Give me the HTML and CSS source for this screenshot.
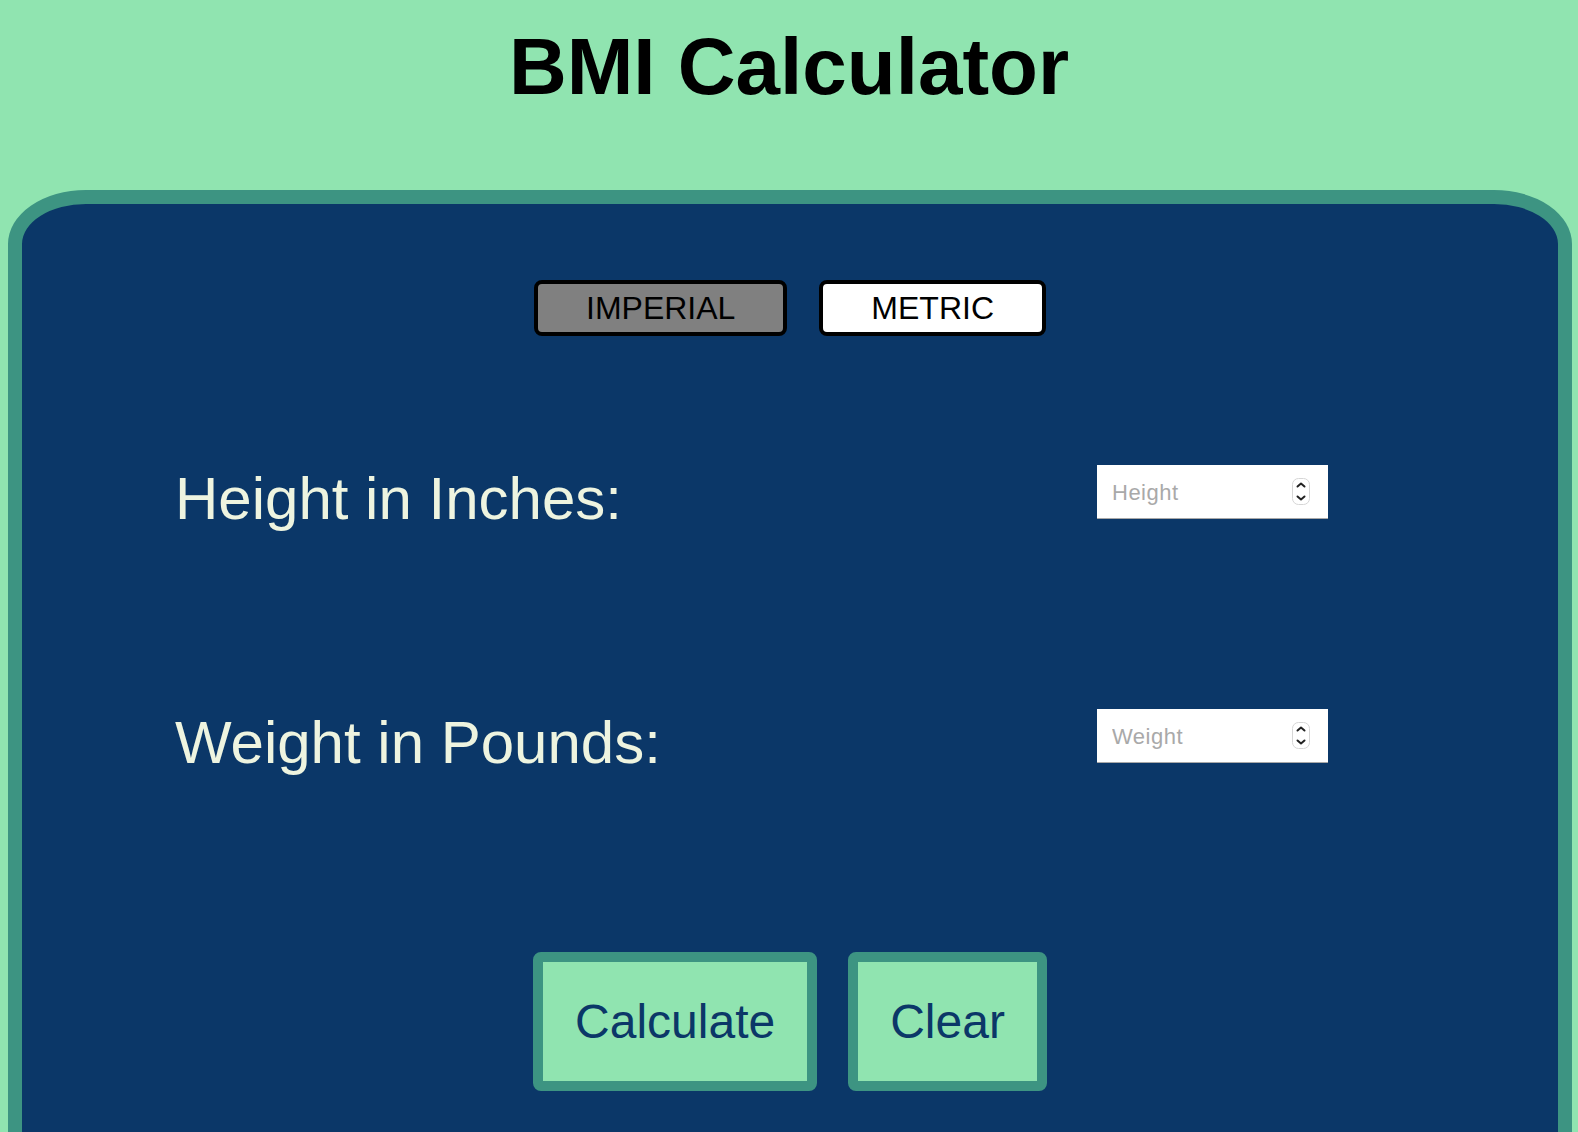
FILE: index.html
```html
<!DOCTYPE html>
<html lang="en">
<head>
<meta charset="utf-8">
<title>BMI Calculator</title>
<link rel="stylesheet" href="styles.css">
</head>
<body>
<h1 class="title">BMI Calculator</h1>
<main class="card">
  <div class="units">
    <button class="unit unit-active" type="button">IMPERIAL</button>
    <button class="unit" type="button">METRIC</button>
  </div>
  <div class="fields">
    <div class="row">
      <label class="label" for="height">Height in Inches:</label>
      <div class="field">
        <input class="input" id="height" type="text" placeholder="Height">
        <svg class="spin" width="18" height="27" viewBox="0 0 18 27" aria-hidden="true">
          <rect x="0.5" y="0.5" width="17" height="26" rx="6" fill="#fff" stroke="#d6d6d6"/>
          <path d="M5.5 8.5 L9 5.5 L12.5 8.5" fill="none" stroke="#222" stroke-width="2" stroke-linecap="round" stroke-linejoin="round"/>
          <path d="M5.5 18.5 L9 21.5 L12.5 18.5" fill="none" stroke="#222" stroke-width="2" stroke-linecap="round" stroke-linejoin="round"/>
        </svg>
      </div>
    </div>
    <div class="row row-next">
      <label class="label" for="weight">Weight in Pounds:</label>
      <div class="field">
        <input class="input" id="weight" type="text" placeholder="Weight">
        <svg class="spin" width="18" height="27" viewBox="0 0 18 27" aria-hidden="true">
          <rect x="0.5" y="0.5" width="17" height="26" rx="6" fill="#fff" stroke="#d6d6d6"/>
          <path d="M5.5 8.5 L9 5.5 L12.5 8.5" fill="none" stroke="#222" stroke-width="2" stroke-linecap="round" stroke-linejoin="round"/>
          <path d="M5.5 18.5 L9 21.5 L12.5 18.5" fill="none" stroke="#222" stroke-width="2" stroke-linecap="round" stroke-linejoin="round"/>
        </svg>
      </div>
    </div>
  </div>
  <div class="actions">
    <button class="action" type="button">Calculate</button>
    <button class="action" type="button">Clear</button>
  </div>
</main>
</body>
</html>
```

FILE: styles.css
```css
html, body {
  margin: 0;
  padding: 0;
}

body {
  background: #90e4b0;
  font-family: "Liberation Sans", Arial, sans-serif;
}

.title {
  margin: 0;
  padding-top: 21px;
  font-size: 80px;
  font-weight: bold;
  line-height: normal;
  text-align: center;
  color: #000;
}

.card {
  display: block;
  margin: 77px 6px 0 8px;
  border: 14px solid #3d9482;
  border-radius: 78px / 54px;
  background: #0b3768;
  padding: 76px 0 124px;
}

.units {
  display: flex;
  justify-content: center;
  gap: 32px;
}

.unit {
  box-sizing: border-box;
  height: 56px;
  margin: 0;
  padding: 0 48px;
  border: 4px solid #000;
  border-radius: 8px;
  background: #fff;
  color: #000;
  font-family: "Liberation Sans", Arial, sans-serif;
  font-size: 32px;
  line-height: 48px;
}

.unit-active {
  background: #808080;
}

.fields {
  margin-top: 128px;
}

.row {
  display: flex;
  justify-content: space-between;
  align-items: flex-start;
  padding: 0 230px 0 153px;
}

.row-next {
  margin-top: 175px;
}

.label {
  font-size: 60px;
  line-height: normal;
  color: #eef4e0;
}

.field {
  position: relative;
  margin-top: 1px;
  width: 231px;
  height: 53px;
}

.input {
  box-sizing: border-box;
  display: block;
  width: 231px;
  height: 53px;
  margin: 0;
  padding: 3px 40px 0 15px;
  border: none;
  border-radius: 0;
  box-shadow: 0 1px 0 #a8a8a8;
  background: #fff;
  font-family: "Liberation Sans", Arial, sans-serif;
  font-size: 22px;
  letter-spacing: 0.5px;
  color: #333;
  outline: none;
}

.input::placeholder {
  color: #a9a9a9;
}

.spin {
  position: absolute;
  right: 18px;
  top: 13px;
}

.actions {
  display: flex;
  justify-content: center;
  gap: 31px;
  margin-top: 175px;
}

.action {
  margin: 0;
  padding: 32px;
  border: 10px solid #3d9482;
  border-radius: 8px;
  background: #90e4b0;
  color: #0b3768;
  font-family: "Liberation Sans", Arial, sans-serif;
  font-size: 48px;
  line-height: normal;
}
```
